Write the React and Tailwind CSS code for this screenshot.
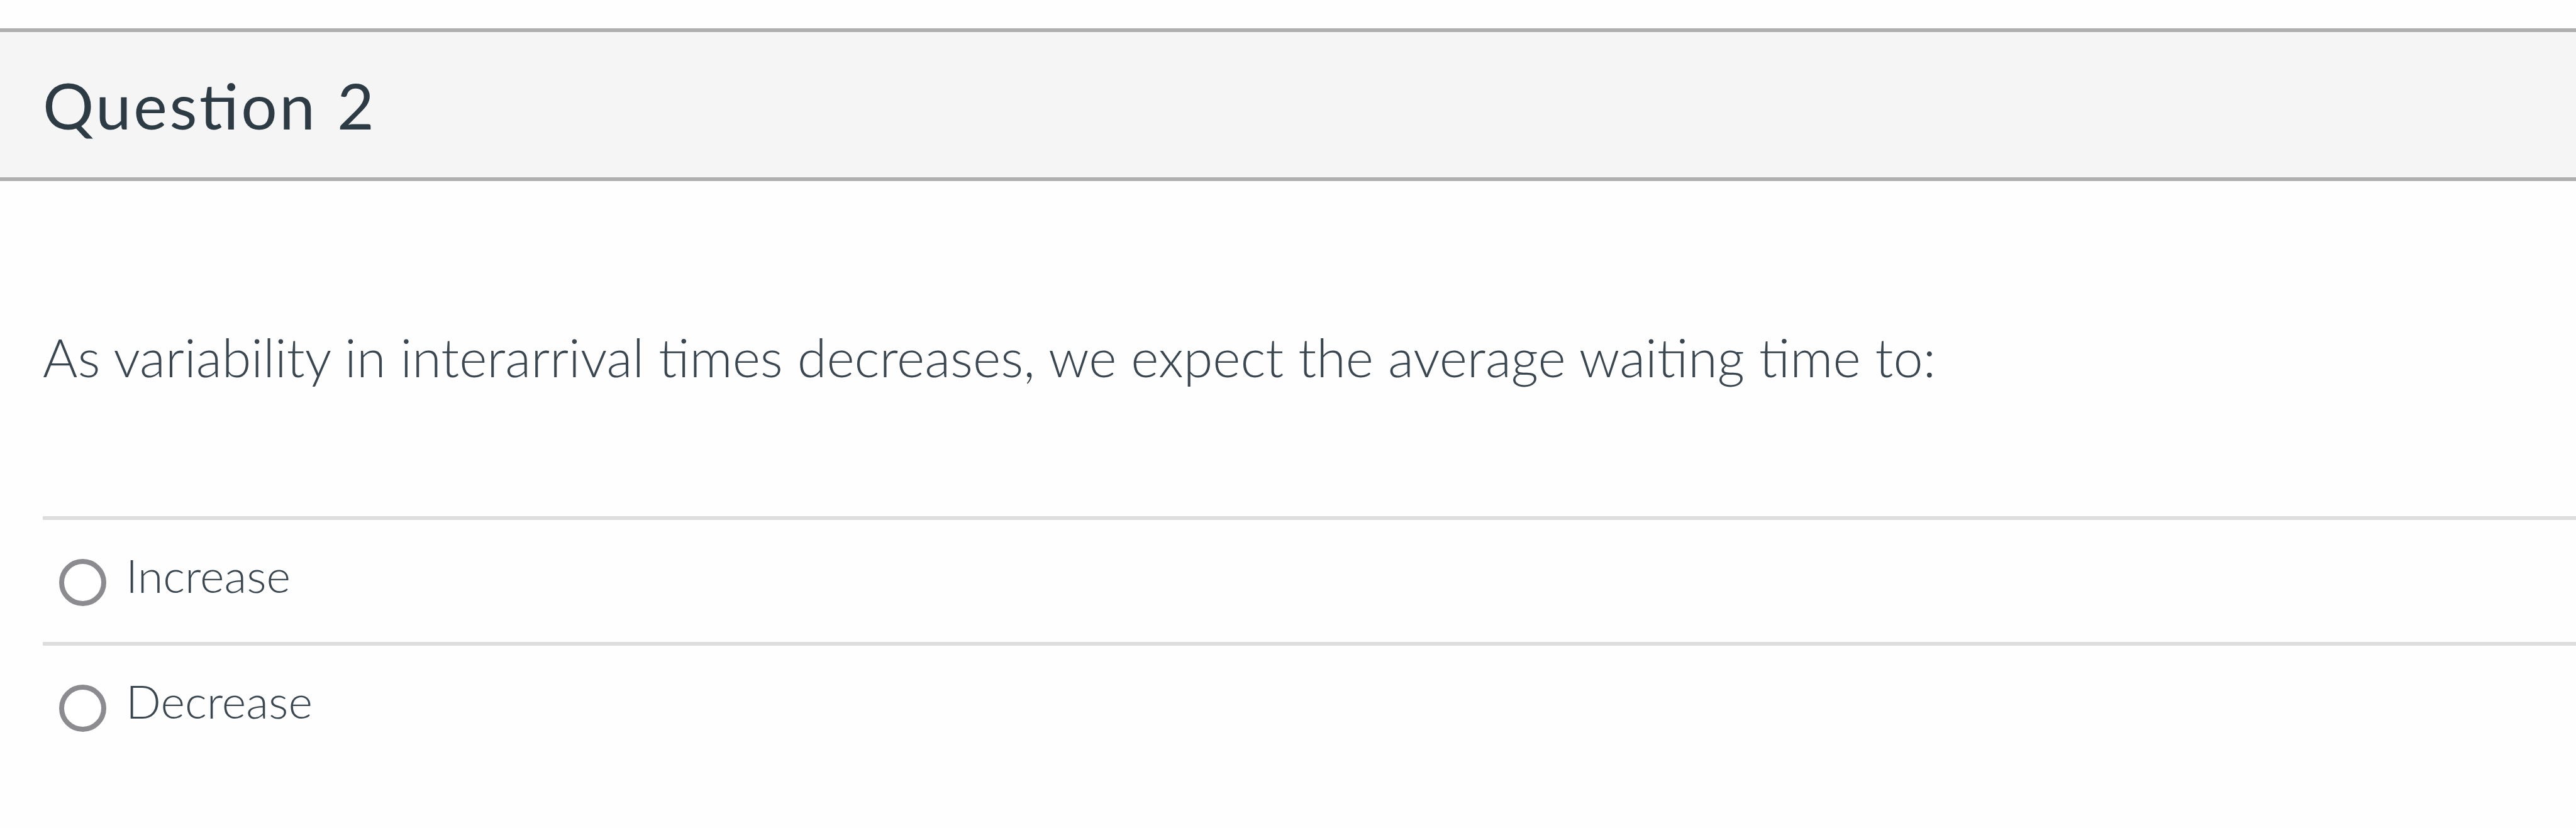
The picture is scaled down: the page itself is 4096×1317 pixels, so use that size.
const answers = ["Increase", "Decrease"];

function Answer({ label }) {
  return (
    <label className="flex h-[200px] items-start border-t-[6px] border-[#dddddd] pl-[26px]">
      <span className="mt-[62px] size-[75px] shrink-0 rounded-full border-8 border-[#8b8b90] bg-white" />
      <span className="ml-[31px] mt-[43.5px] text-[73.8px] leading-[88px] font-light whitespace-nowrap">{label}</span>
    </label>
  );
}

export default function App() {
  return (
    <main className="h-[1317px] w-full overflow-hidden bg-[#fefefe] pt-[45px] font-['Lato',sans-serif] text-[#3a4751]">
      <header className="flex h-[243px] items-center border-y-[6px] border-[#afafaf] bg-[#f5f5f5] pl-[68px]">
        <h1 className="text-[101.5px] leading-[120px] font-normal tracking-[3.6px] whitespace-nowrap text-[#2d3b45] [font-feature-settings:'liga'_1] [word-spacing:2px]">
          Question 2
        </h1>
      </header>
      <section className="pl-[68px]">
        <p className="pt-[228px] text-[84.65px] leading-[102px] font-light whitespace-nowrap">
          As variability in interarrival times decreases, we expect the average waiting time to:
        </p>
        <div className="mt-[203px]">
          {answers.map((label) => (
            <Answer key={label} label={label} />
          ))}
        </div>
      </section>
    </main>
  );
}
